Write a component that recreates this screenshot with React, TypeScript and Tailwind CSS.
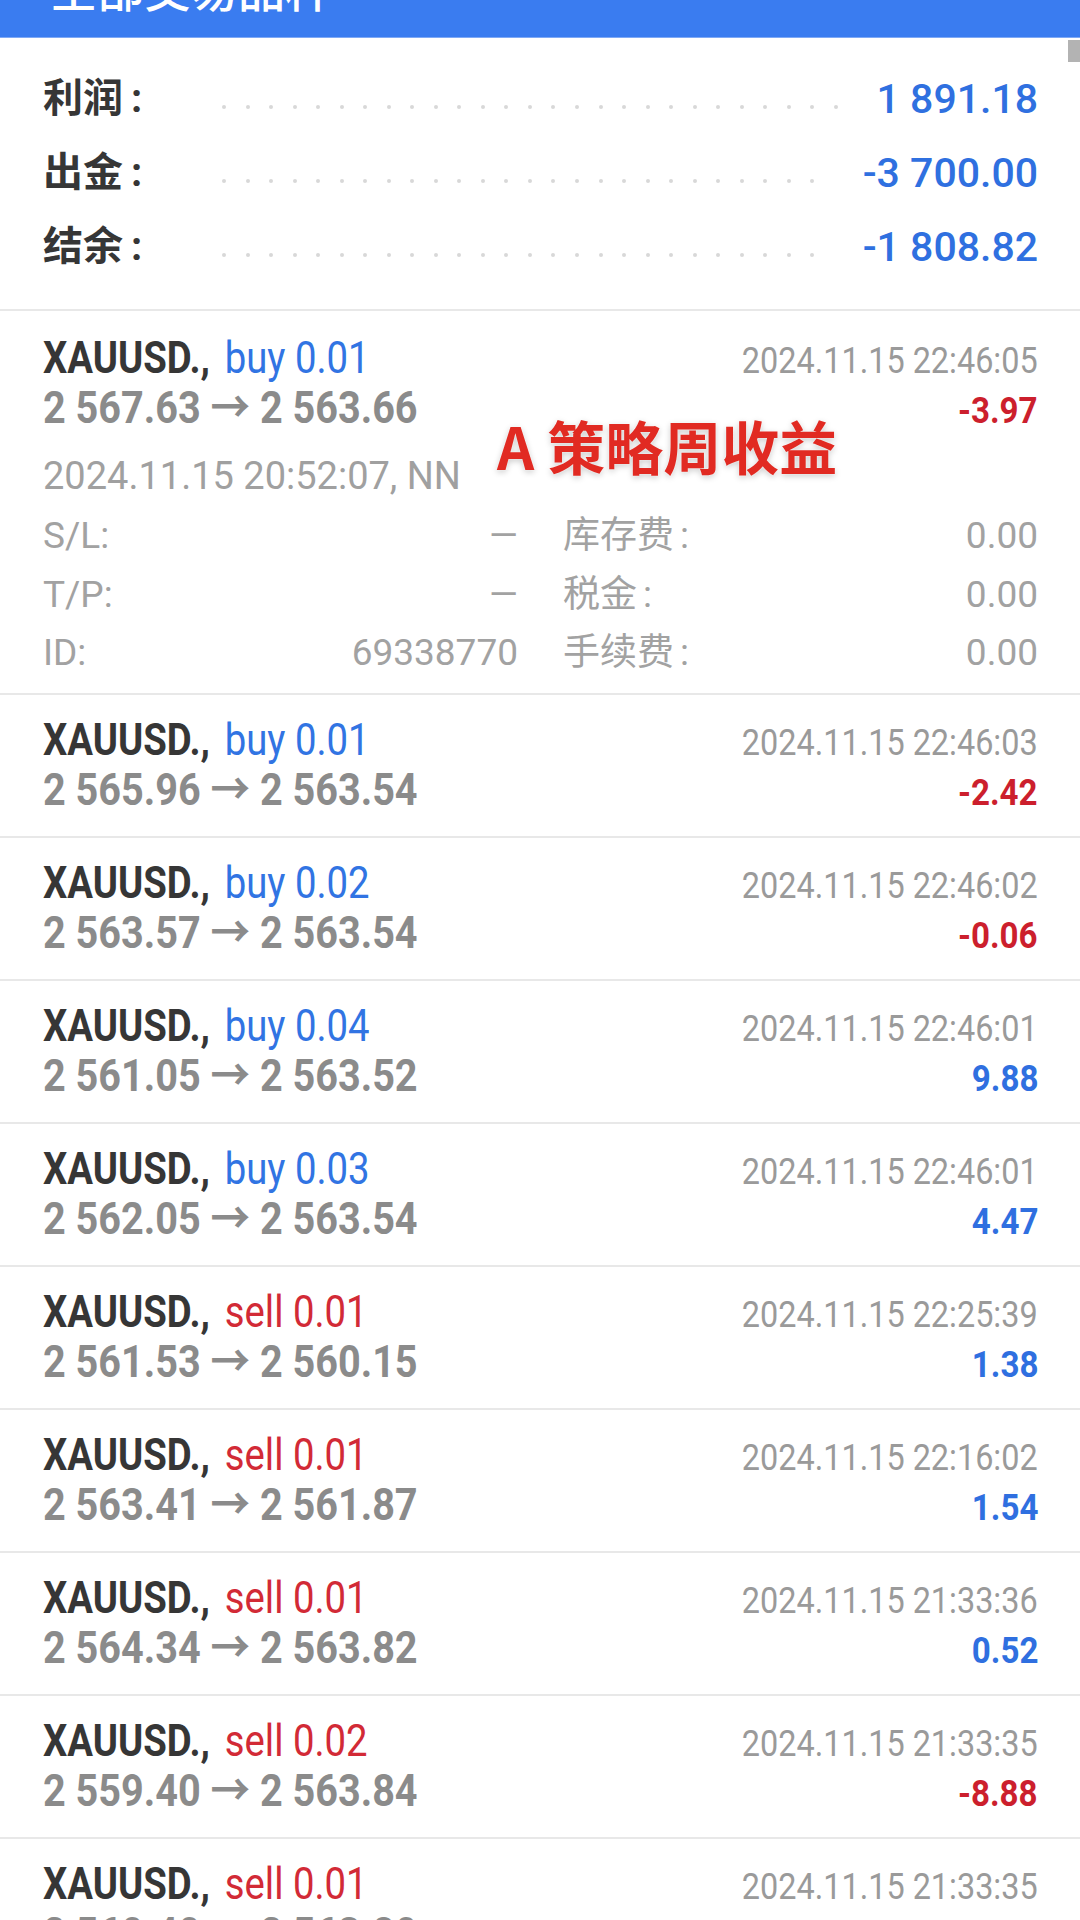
import React from "react";

type Trade = {
  side: "buy" | "sell";
  lot: string;
  time: string;
  open: string;
  close: string;
  profit: string;
};

const trades: Trade[] = [
  { side: "buy", lot: "0.01", time: "2024.11.15 22:46:03", open: "2 565.96", close: "2 563.54", profit: "-2.42" },
  { side: "buy", lot: "0.02", time: "2024.11.15 22:46:02", open: "2 563.57", close: "2 563.54", profit: "-0.06" },
  { side: "buy", lot: "0.04", time: "2024.11.15 22:46:01", open: "2 561.05", close: "2 563.52", profit: "9.88" },
  { side: "buy", lot: "0.03", time: "2024.11.15 22:46:01", open: "2 562.05", close: "2 563.54", profit: "4.47" },
  { side: "sell", lot: "0.01", time: "2024.11.15 22:25:39", open: "2 561.53", close: "2 560.15", profit: "1.38" },
  { side: "sell", lot: "0.01", time: "2024.11.15 22:16:02", open: "2 563.41", close: "2 561.87", profit: "1.54" },
  { side: "sell", lot: "0.01", time: "2024.11.15 21:33:36", open: "2 564.34", close: "2 563.82", profit: "0.52" },
  { side: "sell", lot: "0.02", time: "2024.11.15 21:33:35", open: "2 559.40", close: "2 563.84", profit: "-8.88" },
  { side: "sell", lot: "0.01", time: "2024.11.15 21:33:35", open: "2 560.40", close: "2 563.80", profit: "0.00" },
];

const summary = [
  { label: "利润", value: "1 891.18", dots: 27 },
  { label: "出金", value: "-3 700.00", dots: 26 },
  { label: "结余", value: "-1 808.82", dots: 26 },
];

function HeadLine({ side, lot, time }: { side: "buy" | "sell"; lot: string; time: string }) {
  return (
    <div className="flex h-[50px] items-baseline justify-between">
      <span className="inline-block origin-left scale-x-[0.87] whitespace-nowrap text-[44px] leading-[50px]">
        <span className="font-bold text-[#363636]">XAUUSD.,</span>
        <span className={side === "buy" ? "ml-[17px] text-[#3174e3]" : "ml-[17px] text-[#d22a36]"}>
          {side} {lot}
        </span>
      </span>
      <span className="inline-block origin-right scale-x-[0.9] whitespace-nowrap text-[36px] leading-[50px] text-[#9a9a9a]">
        {time}
      </span>
    </div>
  );
}

function PriceLine({ open, close, profit }: { open: string; close: string; profit: string }) {
  const neg = profit.startsWith("-");
  return (
    <div className="flex h-[50px] items-baseline justify-between">
      <span className="inline-block origin-left scale-x-[0.9] whitespace-nowrap text-[44px] font-bold leading-[50px] text-[#8b8b8b]">
        {open} → {close}
      </span>
      <span
        className={
          neg
            ? "inline-block origin-right scale-x-[0.92] whitespace-nowrap text-[36px] font-bold leading-[50px] text-[#cc1f2d]"
            : "inline-block origin-right scale-x-[0.92] whitespace-nowrap text-[36px] font-bold leading-[50px] text-[#2f6fe0]"
        }
      >
        {profit}
      </span>
    </div>
  );
}

function DetailCell({ label, value, cjk }: { label: string; value: string; cjk?: boolean }) {
  return (
    <div className="flex h-[58.5px] items-baseline justify-between text-[37px] leading-[58.5px] text-[#a2a2a2]">
      <span className="whitespace-nowrap">
        {label}
        <span className={cjk ? "ml-[6px]" : ""}>:</span>
      </span>
      <span className="whitespace-nowrap">{value}</span>
    </div>
  );
}

export default function App() {
  return (
    <div className="relative h-[1920px] w-[1080px] overflow-hidden bg-white font-['Roboto','Noto_Sans_CJK_SC',sans-serif]">
      {/* top bar */}
      <div className="h-[38px] overflow-hidden border-b border-[#7fa9f5] bg-[#3a7cf0]">
        <div className="mt-[-37px] pl-[50px] font-['Noto_Sans_CJK_SC',sans-serif] text-[47px] font-medium leading-[47px] text-white">
          全部交易品种
        </div>
      </div>

      {/* summary */}
      <div className="border-b-2 border-[#e8e8e8] pb-[25px] pl-[43px] pr-[42px] pt-[24px]">
        {summary.map((s) => (
          <div key={s.label} className="flex h-[74px] items-center leading-[74px]">
            <span className="w-[179px] whitespace-nowrap text-[40px] font-bold text-[#363636]">
              {s.label}
              <span className="ml-[8px]">:</span>
            </span>
            <div className="mt-[16px] flex gap-[19.54px]">
              {Array.from({ length: s.dots }).map((_, i) => (
                <span key={i} className="h-[4px] w-[4px] rounded-full bg-[#d8d8d8]" />
              ))}
            </div>
            <span className="ml-auto whitespace-nowrap text-[41px] font-medium text-[#2f70e0]">{s.value}</span>
          </div>
        ))}
      </div>

      {/* expanded first trade */}
      <div className="border-b-2 border-[#e8e8e8] pb-[10px] pl-[43px] pr-[42px] pt-[22px]">
        <HeadLine side="buy" lot="0.01" time="2024.11.15 22:46:05" />
        <PriceLine open="2 567.63" close="2 563.66" profit="-3.97" />
        <div className="mt-[14px] h-[58px] text-[38px] leading-[58px] text-[#a0a0a0]">2024.11.15 20:52:07, NN</div>
        <div className="mt-[2px] grid grid-cols-2 gap-x-[45px]">
          <DetailCell label="S/L" value="—" />
          <DetailCell label="库存费" value="0.00" cjk />
          <DetailCell label="T/P" value="—" />
          <DetailCell label="税金" value="0.00" cjk />
          <DetailCell label="ID" value="69338770" />
          <DetailCell label="手续费" value="0.00" cjk />
        </div>
      </div>

      {/* other trades */}
      {trades.map((t, i) => (
        <div key={i} className="border-b-2 border-[#e8e8e8] pb-[21px] pl-[43px] pr-[42px] pt-[20px]">
          <HeadLine side={t.side} lot={t.lot} time={t.time} />
          <PriceLine open={t.open} close={t.close} profit={t.profit} />
        </div>
      ))}

      {/* scroll indicator */}
      <div className="absolute right-0 top-[40px] h-[22px] w-[12px] bg-[#b3b3b3]" />

      {/* watermark caption */}
      <div className="absolute left-[497px] top-[416px] flex items-baseline whitespace-nowrap font-['Noto_Sans_CJK_SC',sans-serif] text-[58px] font-bold leading-[58px] text-[#e12a22] [text-shadow:0_0_2px_#ffffff,0_2px_6px_rgba(0,0,0,0.22)]">
        <span className="mr-[13px]">A</span>
        <span>策略周收益</span>
      </div>
    </div>
  );
}
